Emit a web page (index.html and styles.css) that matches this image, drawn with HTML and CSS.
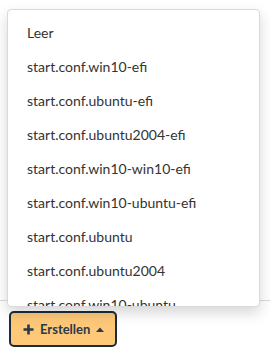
FILE: index.html
```html
<!DOCTYPE html>
<html>
<head>
<meta charset="utf-8">
<link rel="stylesheet" href="styles.css">
</head>
<body>
<div class="page">
  <div class="content"></div>
  <div class="footer">
    <div class="dropdown">
      <ul class="menu">
        <li>Leer</li>
        <li>start.conf.win10-efi</li>
        <li>start.conf.ubuntu-efi</li>
        <li>start.conf.ubuntu2004-efi</li>
        <li>start.conf.win10-win10-efi</li>
        <li>start.conf.win10-ubuntu-efi</li>
        <li>start.conf.ubuntu</li>
        <li>start.conf.ubuntu2004</li>
        <li>start.conf.win10-ubuntu</li>
        <li>start.conf.win10-win10</li>
      </ul>
      <button class="btn">
        <svg class="plus" width="11" height="11" viewBox="0 0 11 11"><path d="M5.5 0.5V10.5M0.5 5.5H10.5" stroke="currentColor" stroke-width="2.6" fill="none"/></svg>
        <span>Erstellen</span>
        <svg class="caret" width="8" height="5" viewBox="0 0 8 5"><path d="M0 5L4 0.5L8 5Z" fill="currentColor"/></svg>
      </button>
    </div>
  </div>
</div>
</body>
</html>
```
FILE: styles.css
```css
html, body {
  margin: 0;
  padding: 0;
  background: #fff;
  font-family: Lato, "Open Sans", sans-serif;
}
.page {
  width: 270px;
  height: 348px;
  overflow: hidden;
  display: flex;
  flex-direction: column;
}
.content {
  height: 300px;
  flex: none;
}
.footer {
  border-top: 1px solid #dcdcdc;
  padding: 10px 0 0 9px;
}
.dropdown {
  position: relative;
  display: inline-block;
}
.menu {
  position: absolute;
  left: -2px;
  bottom: 40px;
  width: 251px;
  height: 290px;
  margin: 0;
  padding: 6px 0 0 0;
  box-sizing: content-box;
  list-style: none;
  background: #fff;
  border: 1px solid #d9d9d9;
  border-radius: 4px;
  box-shadow: 0 6px 14px rgba(0, 0, 0, 0.16);
  overflow: hidden;
  z-index: 2;
}
.menu li {
  height: 34px;
  line-height: 34px;
  padding-left: 19px;
  font-size: 14px;
  color: #333;
  white-space: nowrap;
}
.btn {
  display: flex;
  align-items: center;
  gap: 6px;
  height: 36px;
  width: 108px;
  padding: 0 0 0 12px;
  box-sizing: border-box;
  background: #fdc878;
  border: 2px solid #1e2b38;
  border-radius: 5px;
  color: #2a3a4a;
  font-family: Lato, "Open Sans", sans-serif;
  font-weight: bold;
  font-size: 13px;
}
.plus { flex: none; }
.caret { flex: none; }
```
